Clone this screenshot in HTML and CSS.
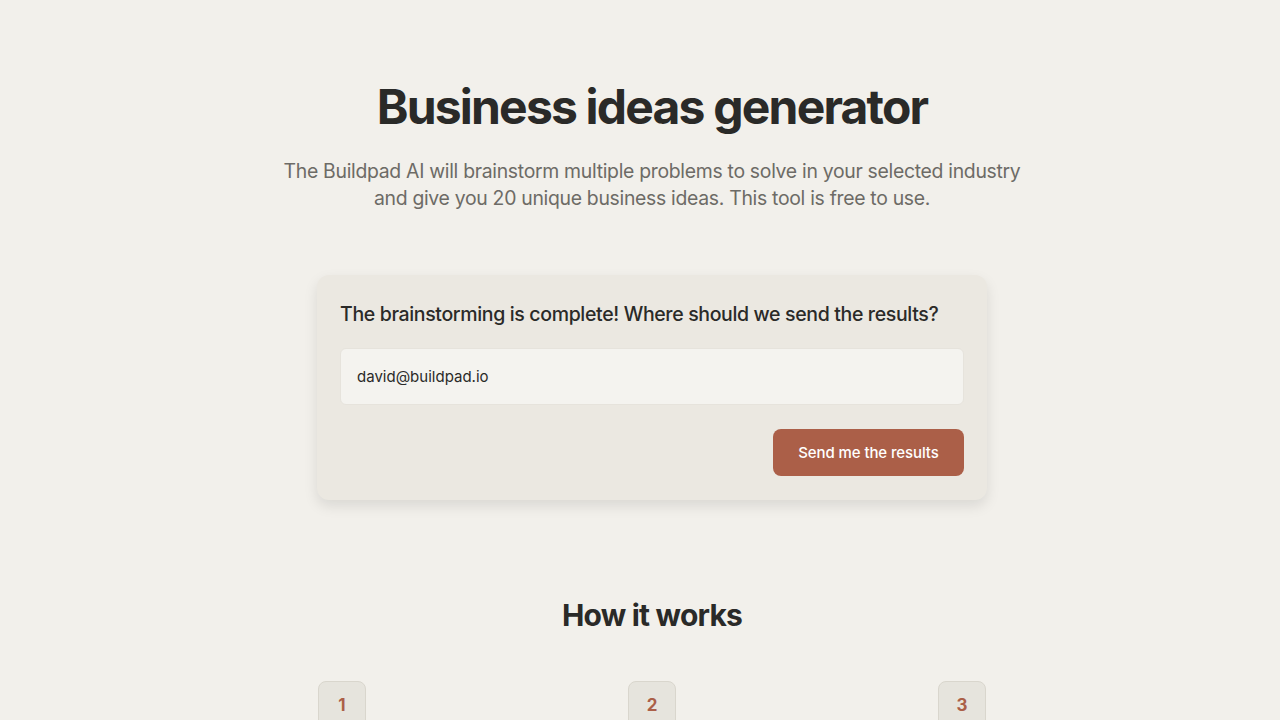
FILE: index.html
```html
<!DOCTYPE html>
<html lang="en">
<head>
<meta charset="utf-8">
<title>Business ideas generator</title>
<link rel="stylesheet" href="styles.css">
</head>
<body>
<main class="page">
  <header class="hero">
    <h1 class="hero-title">Business ideas generator</h1>
    <p class="hero-sub">The Buildpad AI will brainstorm multiple problems to solve in your selected industry and give you 20 unique business ideas. This tool is free to use.</p>
  </header>

  <section class="card">
    <h2 class="card-title">The brainstorming is complete! Where should we send the results?</h2>
    <input class="email" type="email" value="david@buildpad.io">
    <div class="actions">
      <button class="btn" type="button">Send me the results</button>
    </div>
  </section>

  <section class="how">
    <h2 class="how-title">How it works</h2>
    <div class="steps">
      <div class="step"><span class="step-num">1</span></div>
      <div class="step"><span class="step-num">2</span></div>
      <div class="step"><span class="step-num">3</span></div>
    </div>
  </section>
</main>
</body>
</html>
```
FILE: styles.css
```css
* { box-sizing: border-box; }
html, body { margin: 0; padding: 0; }
body {
  background: #f2f0eb;
  color: #2a2a28;
  font-family: Inter, "Noto Sans", sans-serif;
}
.page {
  display: flex;
  flex-direction: column;
  align-items: center;
  padding-top: 77px;
  padding-left: 24px;
}
.hero {
  width: 760px;
  display: flex;
  flex-direction: column;
  align-items: center;
  text-align: center;
}
.hero-title {
  margin: 0;
  font-size: 48px;
  line-height: 60px;
  font-weight: 700;
  letter-spacing: -1.8px;
  color: #2a2a28;
}
.hero-sub {
  max-width: 752px;
  margin: 21px 0 0;
  font-size: 19.4px;
  line-height: 27px;
  color: #6d6b66;
  letter-spacing: -0.3px;
}
.card {
  width: 670px;
  margin-top: 63px;
  background: #ebe8e1;
  border-radius: 12px;
  padding: 26px 23px 24px 23px;
  box-shadow: 0 6px 14px rgba(0,0,0,0.10);
}
.card-title {
  margin: 0;
  font-size: 19.5px;
  line-height: 26px;
  font-weight: 500;
  letter-spacing: -0.35px;
  color: #2a2a28;
}
.email {
  display: block;
  width: 100%;
  height: 57px;
  margin-top: 21px;
  padding: 0 16px;
  border: 1px solid #e6e3dc;
  border-radius: 6px;
  background: #f4f3ef;
  font-family: Inter, "Noto Sans", sans-serif;
  font-size: 15px;
  color: #2a2a28;
  outline: none;
}
.actions {
  display: flex;
  justify-content: flex-end;
  margin-top: 24px;
}
.btn {
  height: 47px;
  width: 191px;
  border: 0;
  border-radius: 8px;
  background: #ab5f48;
  color: #fff;
  font-family: Inter, "Noto Sans", sans-serif;
  font-size: 15px;
  font-weight: 500;
  letter-spacing: -0.1px;
}
.how {
  width: 670px;
  margin-top: 97px;
}
.how-title {
  margin: 0;
  text-align: center;
  font-size: 30px;
  line-height: 36px;
  font-weight: 700;
  letter-spacing: -0.8px;
  color: #2a2a28;
}
.steps {
  display: flex;
  justify-content: space-between;
  margin-top: 48px;
  padding: 0 1px;
}
.step-num {
  display: flex;
  align-items: center;
  justify-content: center;
  width: 48px;
  height: 48px;
  border: 1px solid #d9d6cd;
  border-radius: 8px;
  background: #e6e4dd;
  color: #ab5f48;
  font-size: 17px;
  font-weight: 700;
}
```
